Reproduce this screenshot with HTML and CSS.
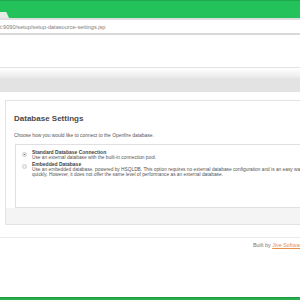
FILE: index.html
```html
<!DOCTYPE html>
<html lang="en">
<head>
    <meta charset="UTF-8">
    <meta name="viewport" content="width=device-width, initial-scale=1.0">
    <title>Openfire Setup</title>
    <link rel="stylesheet" href="styles.css">
</head>
<body>

    <div class="page">
        <div class="tabbar">
            <div class="tab"></div>
        </div>

        <div class="address">t:9090/setup/setup-datasource-settings.jsp</div>

        <div class="logo-area"></div>

        <div class="navbar"></div>

        <div class="main">
            <div class="panel">
                <h1>Database Settings</h1>
                <p class="intro">Choose how you would like to connect to the Openfire database.</p>

                <div class="options">
                    <div class="option">
                        <span class="radio checked"></span>
                        <div class="option-text">
                            <b>Standard Database Connection</b>
                            <span>Use an external database with the built-in connection pool.</span>
                        </div>
                    </div>
                    <div class="option">
                        <span class="radio"></span>
                        <div class="option-text">
                            <b>Embedded Database</b>
                            <span>Use an embedded database, powered by HSQLDB. This option requires no external database configuration and is an easy way to get up and running
                            quickly. However, it does not offer the same level of performance as an external database.</span>
                        </div>
                    </div>
                </div>

                <div class="panel-foot"></div>
            </div>
        </div>

        <div class="footer">
            Built by <a href="#">Jive Software</a>
        </div>

        <div class="bottombar"></div>
    </div>

</body>
</html>
```

FILE: styles.css
```css
* {
    margin: 0;
    padding: 0;
    box-sizing: border-box;
}
html, body {
    width: 300px;
    height: 300px;
    overflow: hidden;
    background: white;
    font-family: "Liberation Sans", Arial, sans-serif;
}
.page {
    width: 360px;
    height: 300px;
    display: flex;
    flex-direction: column;
}
.tabbar {
    height: 18px;
    background: #24c25b;
    border-top: 1px solid #1fa94f;
    display: flex;
    align-items: flex-end;
}
.tab {
    width: 9px;
    height: 6px;
    background: #e6ebe7;
    clip-path: polygon(0 0, 70% 0, 100% 100%, 0 100%);
}
.address {
    height: 17px;
    border-top: 2px solid #dedede;
    border-bottom: 2px solid #d9d9d9;
    font-size: 5.6px;
    color: #7e7e7e;
    line-height: 13px;
    padding-top: 1px;
    white-space: nowrap;
}
.logo-area {
    height: 32px;
}
.navbar {
    height: 25px;
    border-top: 1px solid #e2e2e2;
    border-bottom: 1px solid #e2e2e2;
    background: linear-gradient(#ffffff, #ececec 40%, #e3e3e3 45%, #e3e3e3);
}
.main {
    padding: 8px 0 0 5px;
}
.panel {
    border: 1px solid #e3e3e3;
    background: white;
    color: #444;
}
.panel h1 {
    font-size: 8px;
    font-weight: bold;
    color: #4a4a4a;
    padding: 13px 0 0 8px;
    line-height: 10px;
}
.intro {
    font-size: 4.9px;
    color: #555;
    padding: 9px 0 0 8px;
    line-height: 6px;
}
.options {
    margin: 5px 0 0 9px;
    border: 1px solid #e0e0e0;
    height: 64px;
    padding: 5px 0 0 6px;
    display: flex;
    flex-direction: column;
    gap: 2px;
}
.option {
    display: flex;
    gap: 5px;
    align-items: flex-start;
}
.radio {
    width: 5px;
    height: 5px;
    margin-top: 2px;
    border-radius: 50%;
    border: 1px solid #cfcfcf;
    background: #efefef;
    flex-shrink: 0;
}
.radio.checked {
    background: radial-gradient(#777 35%, #e5e5e5 45%);
}
.option-text {
    display: flex;
    flex-direction: column;
    font-size: 4.8px;
    line-height: 5px;
    color: #555;
}
.option-text b {
    color: #444;
    font-size: 5px;
}
.panel-foot {
    height: 16px;
    background: #f4f4f4;
}
.footer {
    margin-top: 12px;
    border-top: 1px solid #e9e9e9;
    padding: 4px 0 0 253px;
    font-size: 5.4px;
    color: #777;
    white-space: nowrap;
}
.footer a {
    color: #e8904a;
}
.bottombar {
    margin-top: auto;
    height: 3px;
    background: #27b04d;
    border-top: 1px solid #1d9a40;
}
```
